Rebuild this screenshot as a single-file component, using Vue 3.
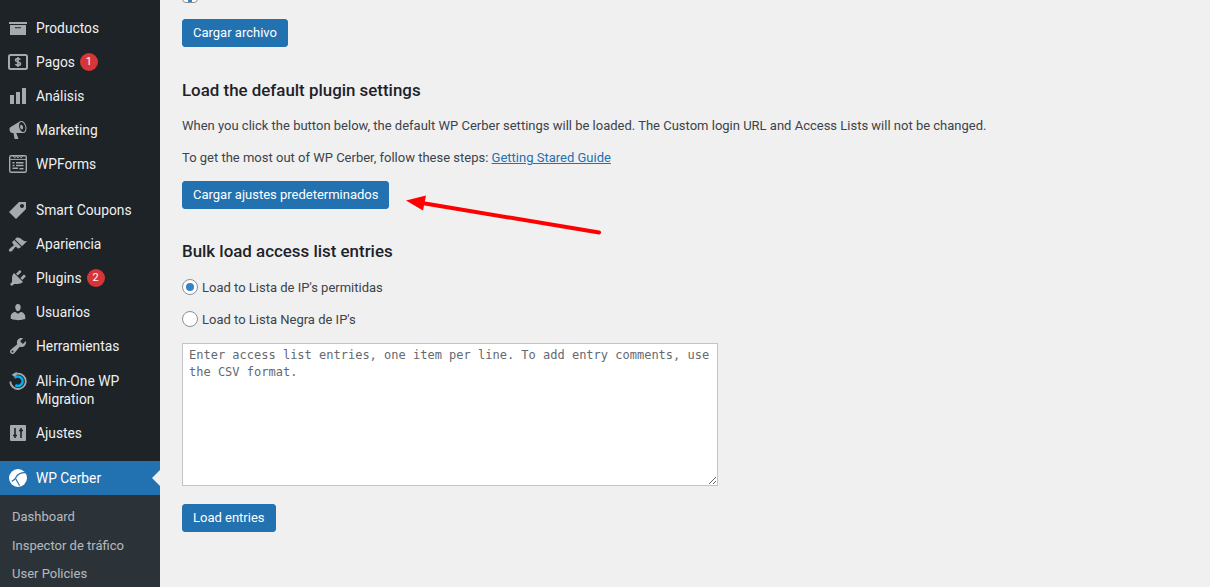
<script setup>
const topItems = [
  { label: '', icon: 'M3 -8h14a1 1 0 0 1 1 1v6a1 1 0 0 1-1 1h-5l-2 2-2-2H3a1 1 0 0 1-1-1v-6a1 1 0 0 1 1-1z' },
  { label: 'Productos', icon: 'M1 4h18v2H1zM2 7h16v10H2zM7 9.2v1.1h6V9.2z' },
  { label: 'Pagos', badge: 1, icon: 'money' },
  { label: 'Análisis', icon: 'M18 18V2h-4v16h4zm-6 0V6H8v12h4zm-6 0v-9H2v9h4z' },
  { label: 'Marketing', icon: 'M18.15 5.94c.46 1.62.38 3.22-.02 4.48-.42 1.28-1.26 2.18-2.3 2.48-.16.06-.26.06-.4.06-.06.02-.12.02-.18.02-.06.02-.14.02-.22.02h-6.8l2.22 5.5c.02.14-.06.26-.14.34-.08.1-.24.16-.34.16H6.95c-.1 0-.26-.06-.34-.16-.08-.08-.16-.2-.14-.34l-1-5.5H4.25l-.02-.02c-.5.06-1.08-.18-1.54-.62s-.88-1.08-1.06-1.88c-.24-.8-.2-1.56-.02-2.2.18-.62.58-1.08 1.06-1.3l.02-.02 9-5.4c.1-.06.18-.1.24-.16.06-.04.14-.08.24-.12.16-.08.28-.12.5-.18 1.04-.3 2.24.1 3.22.98s1.76 2.18 2.26 3.86zm-2.58 5.98h-.02c.4-.1.74-.34 1.04-.7.58-.7.86-1.76.86-3.04-.02-.64-.1-1.3-.28-1.98-.34-1.36-1.02-2.5-1.78-3.24s-1.68-1.1-2.46-.88c-.82.22-1.4.96-1.7 2-.32 1.04-.28 2.36.06 3.72.38 1.36 1 2.5 1.8 3.24.78.74 1.62 1.1 2.48.88zm-2.54-7.08c.22-.04.42-.02.62.04.38.16.76.48 1.02 1s.42 1.2.42 1.78c0 .3-.04.56-.12.8-.18.48-.44.84-.86.94-.34.1-.8-.06-1.14-.4s-.64-.86-.78-1.5c-.18-.62-.12-1.24.02-1.72s.48-.84.82-.94z' },
  { label: 'WPForms', icon: 'wpforms' },
]
const midItems = [
  { label: 'Smart Coupons', icon: 'M11 2h7v7L8 19l-7-7zm3 6c1.1 0 2-.9 2-2s-.9-2-2-2-2 .9-2 2 .9 2 2 2z' },
  { label: 'Apariencia', icon: 'brush' },
  { label: 'Plugins', badge: 2, icon: 'M13.11 4.36L9.87 7.6 8 5.73l3.24-3.24c.35-.34 1.05-.2 1.56.32.52.51.66 1.21.31 1.55zm-8 1.77l.91-1.12 9.01 9.01-1.19.84c-.71.71-2.63 1.16-3.82 1.16H6.14L4.9 17.26c-.59.59-1.54.59-2.12 0-.59-.58-.59-1.53 0-2.12l1.24-1.24v-3.88c0-1.13.4-3.19 1.09-3.89zm7.26 3.97l3.24-3.24c.34-.35 1.04-.21 1.55.31.52.51.66 1.21.31 1.55l-3.24 3.25z' },
  { label: 'Usuarios', icon: 'M10 9.25c-2.27 0-2.73-3.44-2.73-3.44C7 4.02 7.82 2 9.97 2c2.16 0 2.98 2.02 2.71 3.81 0 0-.41 3.44-2.68 3.44zm0 2.57L12.72 10c2.39 0 4.52 2.33 4.52 4.53v2.49s-3.65 1.13-7.24 1.13c-3.65 0-7.24-1.13-7.24-1.13v-2.49c0-2.25 1.94-4.48 4.47-4.48z' },
  { label: 'Herramientas', icon: 'M16.68 9.77c-1.34 1.34-3.3 1.67-4.95.99l-5.41 6.52c-.99.99-2.59.99-3.58 0s-.99-2.59 0-3.57l6.52-5.42c-.68-1.65-.35-3.61.99-4.95 1.28-1.28 3.12-1.62 4.72-1.06l-2.89 2.89 2.82 2.82 2.86-2.87c.53 1.58.18 3.39-1.08 4.65zM3.81 16.21c.4.39 1.04.39 1.43 0 .4-.4.4-1.04 0-1.43-.39-.4-1.03-.4-1.43 0-.39.39-.39 1.03 0 1.43z' },
  { label: 'All-in-One WP Migration', icon: 'migration', tall: true },
  { label: 'Ajustes', icon: 'sliders' },
]
const subItems = ['Dashboard', 'Inspector de tráfico', 'User Policies']
</script>

<template>
  <div class="page">
    <aside class="sidebar">
      <div class="menu-scroll">
        <ul class="menu">
          <li v-for="item in topItems" :key="item.label" class="row">
            <svg class="ico" viewBox="0 0 20 20" aria-hidden="true">
              <template v-if="item.icon === 'money'">
                <rect x="1" y="3" width="18" height="14" rx="1.5" fill="none" stroke="#a7aaad" stroke-width="2" />
                <path d="M12.400 7.600c-.4-.7-1.300-1.100-2.400-1.100-1.400 0-2.400.7-2.400 1.700 0 2.400 4.900 1.200 4.900 3.500 0 1-1 1.700-2.500 1.700-1.200 0-2.100-.5-2.500-1.200M10 5v10" fill="none" stroke="#a7aaad" stroke-width="1.600" />
              </template>
              <template v-else-if="item.icon === 'wpforms'">
                <rect x="1.700" y="1.700" width="16.600" height="16.600" rx="1.500" fill="none" stroke="#a7aaad" stroke-width="1.400" />
                <path d="M1.500 5.400h17M5 1.800l1.600 2 1.700-1.400 1.700 1.400 1.700-1.400 1.700 1.400 1.600-2" fill="none" stroke="#a7aaad" stroke-width="1" />
                <path d="M4.500 8h2v1.400h-2zM8 8h7.500v1.400H8zM4.500 10.800h2v1.400h-2zM8 10.800h7.500v1.400H8zM11.500 14h4v1.600h-4zM4.500 13.600h5.500V15H4.500z" fill="#a7aaad" />
              </template>
              <path v-else :d="item.icon" fill="#a7aaad" fill-rule="evenodd" />
            </svg>
            <span class="label">{{ item.label }}</span>
            <span v-if="item.badge" class="badge">{{ item.badge }}</span>
          </li>
        </ul>
        <ul class="menu group">
          <li v-for="item in midItems" :key="item.label" class="row" :class="{ tall: item.tall }">
            <svg class="ico" viewBox="0 0 20 20" aria-hidden="true">
              <template v-if="item.icon === 'migration'">
                <path d="M6.300 3.600A7.700 7.700 0 1 1 2.400 10.400" fill="none" stroke="#a7aaad" stroke-width="1.800" />
                <path d="M8.800 .8L3.600 3.800l4.600 3.200z" fill="#a7aaad" />
                <path d="M7.300 14.200A4.700 4.700 0 1 0 6.600 6.900" fill="none" stroke="#00aeef" stroke-width="2.600" />
              </template>
              <template v-else-if="item.icon === 'sliders'">
                <rect x="2" y="2" width="16" height="16" rx="1" fill="#a7aaad" />
                <path d="M7 5v10M13 5v10M5 12.500h4M11 7.500h4" fill="none" stroke="#1d2327" stroke-width="1.600" />
              </template>
              <path v-else-if="item.icon === 'brush'" transform="translate(-.5 1.300)" d="M14.480 11.060L7.410 3.990l1.500-1.500c.5-.56 2.300-.47 3.510.32 1.210.8 1.430 1.280 2.910 2.100 1.180.64 2.450 1.260 4.450.85zm-.71.71L6.700 4.700 4.930 6.470c-.39.39-.39 1.020 0 1.410l1.060 1.060c.39.39.39 1.030 0 1.420-.6.6-1.430 1.110-2.210 1.690-.35.26-.7.53-1.010.84C1.430 13.710.96 15.120 1.750 15.900c.78.79 2.190.32 3.320-.82.31-.31.58-.66.84-1.010.58-.78 1.090-1.610 1.690-2.210.39-.39 1.030-.39 1.420 0l1.060 1.060c.39.39 1.020.39 1.410 0z" fill="#a7aaad" />
              <path v-else :d="item.icon" fill="#a7aaad" />
            </svg>
            <span class="label">{{ item.label }}</span>
            <span v-if="item.badge" class="badge">{{ item.badge }}</span>
          </li>
        </ul>
        <div class="row current">
          <svg class="ico" viewBox="0 0 20 20" aria-hidden="true">
            <circle cx="10" cy="10" r="9" fill="#fff" />
            <path d="M17.500 4.600C13.500 4.400 10 5.800 8.300 8.800 7.400 10.500 7 12.300 3.800 13.400" fill="none" stroke="#2271b1" stroke-width="1.300" />
            <path d="M7.800 10.800c.9 2 2.100 4.100 3.800 6.800" fill="none" stroke="#2271b1" stroke-width="1.100" />
          </svg>
          <span class="label">WP Cerber</span>
          <span class="notch"></span>
        </div>
        <ul class="submenu">
          <li v-for="s in subItems" :key="s">{{ s }}</li>
        </ul>
      </div>
    </aside>

    <main class="content">
      <div class="content-scroll">
        <span class="topcheck"></span>
        <button class="btn first" type="button">Cargar archivo</button>

        <h2 class="title one">Load the default plugin settings</h2>
        <p class="text p1">When you click the button below, the default WP Cerber settings will be loaded. The Custom login URL and Access Lists will not be changed.</p>
        <p class="text p2">To get the most out of WP Cerber, follow these steps: <a class="link" href="#">Getting Stared Guide</a></p>
        <div class="action">
          <button class="btn" type="button">Cargar ajustes predeterminados</button>
          <svg class="arrow" viewBox="0 0 200 44" aria-hidden="true">
            <path d="M193 38.500L16 9" stroke="#f00" stroke-width="4" stroke-linecap="round" fill="none" />
            <path d="M0 6.500L20 1.500L17 16.500Z" fill="#f00" />
          </svg>
        </div>

        <h2 class="title two">Bulk load access list entries</h2>
        <label class="radio-row r1">
          <span class="radio on"></span>
          <span>Load to Lista de IP's permitidas</span>
        </label>
        <label class="radio-row r2">
          <span class="radio"></span>
          <span>Load to Lista Negra de IP's</span>
        </label>
        <textarea class="area" placeholder="Enter access list entries, one item per line. To add entry comments, use the CSV format."></textarea>
        <button class="btn last" type="button">Load entries</button>
      </div>
    </main>
  </div>
</template>

<style>
html, body { margin: 0; background: #f0f0f1; }
</style>

<style scoped>
.page {
  display: flex;
  width: 1210px;
  height: 587px;
  overflow: hidden;
  background: #f0f0f1;
  font-family: Roboto, "Liberation Sans", sans-serif;
  font-size: 13px;
  color: #3c434a;
}
.sidebar {
  flex: 0 0 160px;
  background: #1d2327;
  overflow: hidden;
}
.menu-scroll { margin-top: -23px; }
.menu, .submenu { list-style: none; margin: 0; padding: 0; }
.group { margin-top: 12px; }
.row {
  position: relative;
  display: flex;
  align-items: center;
  min-height: 18px;
  padding: 8px 8px 8px 36px;
  font-size: 13.800px;
  line-height: 18px;
  color: #f0f0f1;
}
.tall { padding-top: 9px; }
.ico {
  position: absolute;
  left: 8px;
  top: 7px;
  width: 20px;
  height: 20px;
}
.tall .ico { top: 8px; }
.badge {
  flex: none;
  width: 18px;
  height: 18px;
  margin-left: 5px;
  border-radius: 50%;
  background: #d63638;
  color: #fff;
  font-size: 11px;
  line-height: 18px;
  text-align: center;
}
.current {
  margin-top: 11px;
  background: #2271b1;
  color: #fff;
}
.notch {
  position: absolute;
  right: 0;
  top: 9px;
  border: 8px solid transparent;
  border-left-width: 0;
  border-right-color: #f0f0f1;
}
.submenu {
  padding: 8px 0 7px;
  background: #2c3338;
  color: rgba(240, 246, 252, 0.7);
}
.submenu li {
  padding: 5px 8px 5px 12px;
  line-height: 18.500px;
}
.content {
  flex: 1;
  min-width: 0;
  padding-left: 22px;
}
.content-scroll { margin-top: -13px; }
.topcheck {
  position: relative;
  display: block;
  box-sizing: border-box;
  width: 16px;
  height: 16px;
  border: 1px solid #8c8f94;
  border-radius: 4px;
  background: #fff;
}
.topcheck::after {
  content: "";
  position: absolute;
  left: 5px;
  bottom: 0;
  width: 4px;
  height: 2px;
  background: #3582c4;
}
.btn {
  display: block;
  box-sizing: border-box;
  height: 28px;
  padding: 0 10px;
  border: 1px solid #2271b1;
  border-radius: 3px;
  background: #2271b1;
  color: #fff;
  font-family: inherit;
  font-size: 13px;
  font-weight: 400;
  line-height: 26px;
}
.first { margin-top: 16px; }
.title {
  margin: 0;
  font-size: 16.900px;
  font-weight: 500;
  line-height: 20px;
  color: #1d2327;
}
.one { margin-top: 33px; }
.two { margin-top: 32px; }
.text { margin: 0; line-height: 18px; }
.p1 { margin-top: 17px; }
.p2 { margin-top: 14px; }
.link { color: #2271b1; text-decoration: underline; }
.action {
  position: relative;
  margin-top: 14px;
}
.arrow {
  position: absolute;
  left: 224px;
  top: 13px;
  width: 200px;
  height: 44px;
}
.radio-row {
  display: flex;
  align-items: center;
  gap: 4px;
  height: 18px;
}
.r1 { margin-top: 17px; }
.r2 { margin-top: 14px; }
.radio {
  box-sizing: border-box;
  width: 16px;
  height: 16px;
  border: 1px solid #8c8f94;
  border-radius: 50%;
  background: #fff;
  display: flex;
  align-items: center;
  justify-content: center;
}
.radio.on::before {
  content: "";
  width: 8px;
  height: 8px;
  border-radius: 50%;
  background: #3582c4;
}
.area {
  display: block;
  box-sizing: border-box;
  width: 536px;
  height: 143px;
  margin-top: 15px;
  padding: 3px 6px;
  border: 1px solid #c3c4c7;
  border-radius: 0;
  background: #fff;
  font-family: "DejaVu Sans Mono", monospace;
  font-size: 12px;
  line-height: 17px;
  color: #2c3338;
  outline: none;
}
.area::placeholder { color: #646970; opacity: 1; }
.last { margin-top: 18px; }
</style>
